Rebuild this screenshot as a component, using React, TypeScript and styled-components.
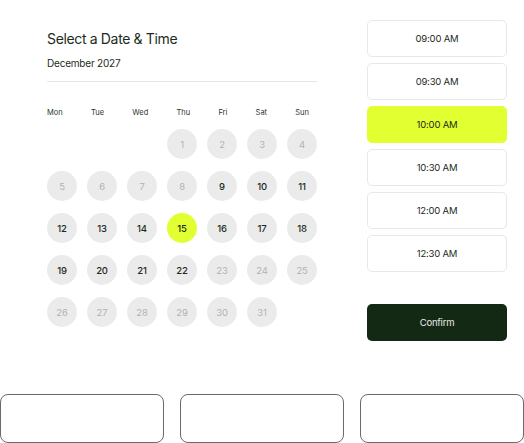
import React from "react";
import styled, { createGlobalStyle } from "styled-components";

const Global = createGlobalStyle`
  html, body { margin: 0; padding: 0; background: #ffffff; }
  body { font-family: Inter, "Liberation Sans", Arial, sans-serif; color: #1b2b1b; }
  * { box-sizing: border-box; }
`;

const Page = styled.div`
  width: 524px;
  display: flex;
  flex-direction: column;
`;

const Top = styled.div`
  display: flex;
  align-items: flex-start;
  gap: 50px;
  padding-left: 47px;
`;

const CalendarCol = styled.div`
  width: 270px;
  display: flex;
  flex-direction: column;
  padding-top: 30px;
`;

const Title = styled.h1`
  margin: 0;
  font-size: 14px;
  line-height: 18px;
  font-weight: 400;
  letter-spacing: -0.35px;
  color: #1b2b1b;
`;

const Month = styled.div`
  margin-top: 8px;
  font-size: 10px;
  line-height: 14px;
  font-weight: 400;
  letter-spacing: -0.2px;
`;

const Divider = styled.hr`
  margin: 11px 0 0;
  border: none;
  border-top: 1px solid #e6e6e6;
  width: 270px;
`;

const Weekdays = styled.div`
  margin-top: 26px;
  width: 262px;
  display: flex;
  justify-content: space-between;
  font-size: 7.5px;
  line-height: 10px;
  font-weight: 400;
  color: #2a352a;
`;

const Grid = styled.div`
  margin-top: 11px;
  display: grid;
  grid-template-columns: repeat(7, 30px);
  column-gap: 10px;
  row-gap: 12px;
`;

const Day = styled.div<{ $state: "off" | "on" | "sel" | "empty" }>`
  width: 30px;
  height: 30px;
  border-radius: 50%;
  display: flex;
  align-items: center;
  justify-content: center;
  font-size: 9.5px;
  font-weight: ${(p) => (p.$state === "off" ? 400 : 500)};
  letter-spacing: -0.2px;
  background: ${(p) =>
    p.$state === "empty" ? "transparent" : p.$state === "sel" ? "#e2ff32" : "#ebebeb"};
  color: ${(p) => (p.$state === "off" ? "#b2b2b2" : "#1b2b1b")};
`;

const TimeCol = styled.div`
  width: 140px;
  padding-top: 20px;
  display: flex;
  flex-direction: column;
  gap: 6px;
`;

const Slot = styled.div<{ $active?: boolean }>`
  height: 37px;
  border-radius: 5px;
  border: 1px solid ${(p) => (p.$active ? "#e2ff32" : "#e8e8e8")};
  background: ${(p) => (p.$active ? "#e2ff32" : "#ffffff")};
  display: flex;
  align-items: center;
  justify-content: center;
  font-size: 9.5px;
  font-weight: 400;
  letter-spacing: -0.2px;
  color: #1b2b1b;
`;

const Confirm = styled.button`
  margin-top: 26px;
  height: 37px;
  border: none;
  border-radius: 5px;
  background: #142914;
  color: #e8ece8;
  font-family: inherit;
  font-size: 9.5px;
  font-weight: 400;
  letter-spacing: -0.2px;
`;

const Bottom = styled.div`
  margin-top: 53px;
  display: grid;
  grid-template-columns: repeat(3, 1fr);
  gap: 16px;
`;

const Box = styled.div`
  height: 49px;
  border: 1px solid #686c68;
  border-radius: 8px;
`;

const weekdays = ["Mon", "Tue", "Wed", "Thu", "Fri", "Sat", "Sun"];
const times = ["09:00 AM", "09:30 AM", "10:00 AM", "10:30 AM", "12:00 AM", "12:30 AM"];

export default function App() {
  const cells: { n: number | null; s: "off" | "on" | "sel" | "empty" }[] = [];
  for (let i = 0; i < 3; i++) cells.push({ n: null, s: "empty" });
  for (let d = 1; d <= 31; d++) {
    let s: "off" | "on" | "sel" = "off";
    if (d >= 9 && d <= 22) s = "on";
    if (d === 15) s = "sel";
    cells.push({ n: d, s });
  }
  return (
    <Page>
      <Global />
      <Top>
        <CalendarCol>
          <Title>Select a Date &amp; Time</Title>
          <Month>December 2027</Month>
          <Divider />
          <Weekdays>
            {weekdays.map((w) => (
              <span key={w}>{w}</span>
            ))}
          </Weekdays>
          <Grid>
            {cells.map((c, i) => (
              <Day key={i} $state={c.s}>
                {c.n}
              </Day>
            ))}
          </Grid>
        </CalendarCol>
        <TimeCol>
          {times.map((t) => (
            <Slot key={t} $active={t === "10:00 AM"}>
              {t}
            </Slot>
          ))}
          <Confirm>Confirm</Confirm>
        </TimeCol>
      </Top>
      <Bottom>
        <Box />
        <Box />
        <Box />
      </Bottom>
    </Page>
  );
}
